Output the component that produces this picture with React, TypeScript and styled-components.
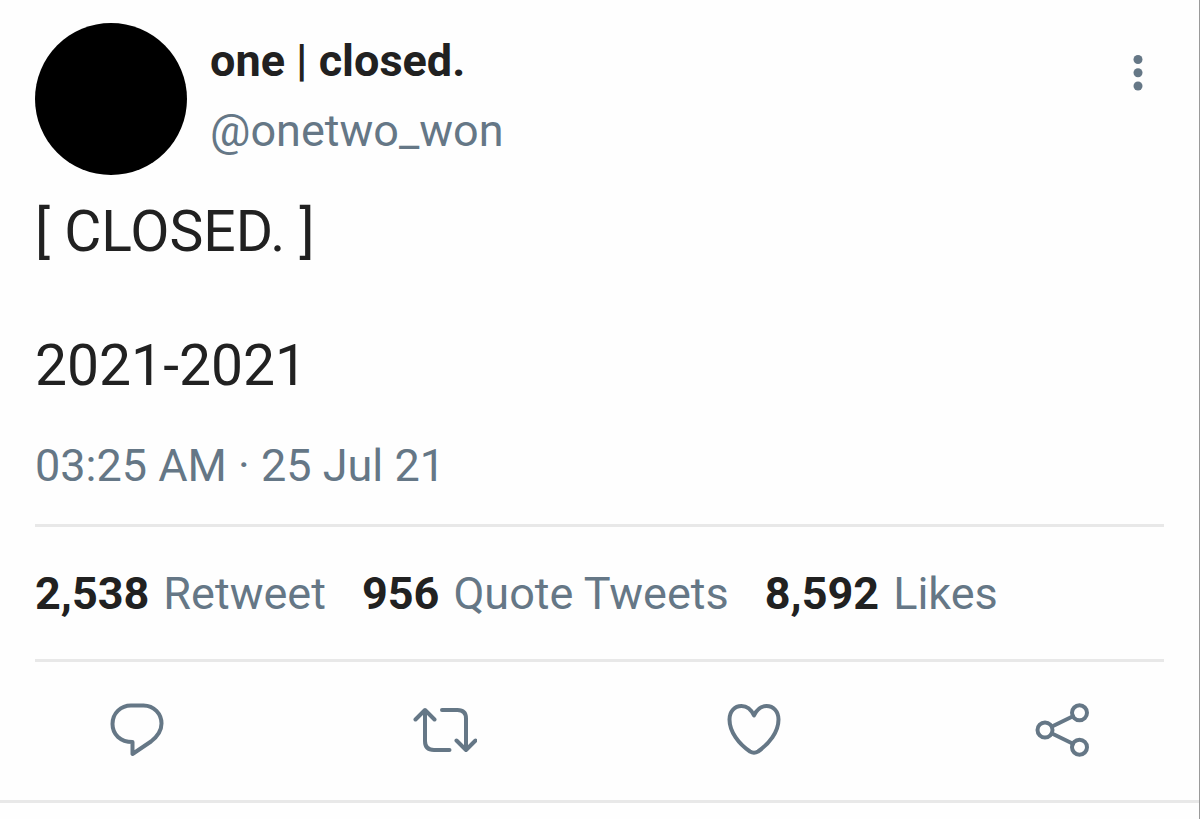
import React from "react";
import styled, { createGlobalStyle } from "styled-components";

const ink = "#212121";
const slate = "#657786";
const line = "#e8e8e8";

const GlobalStyle = createGlobalStyle`
  *, *::before, *::after { box-sizing: border-box; }
  body {
    margin: 0;
    background: #fefefe;
    color: ${ink};
    font-family: Roboto, "Liberation Sans", sans-serif;
    font-size: 45px;
  }
`;

const Page = styled.main`
  min-height: 100vh;
  border-right: 1px solid #9a9a9a;
`;

const Tweet = styled.article`
  padding: 23px 35px 0;
  border-bottom: 3px solid ${line};
`;

const Header = styled.header`
  display: flex;
  align-items: flex-start;
  gap: 23px;
`;

const Avatar = styled.div`
  flex: none;
  width: 152px;
  height: 152px;
  border-radius: 50%;
  background: #000;
`;

const Names = styled.div`
  display: flex;
  flex-direction: column;
  flex: 1;
  min-width: 0;
  padding-top: 3px;
  line-height: 70px;
`;

const DisplayName = styled.strong`
  font-weight: 700;
`;

const Handle = styled.a`
  color: ${slate};
  text-decoration: none;
`;

const IconButton = styled.button`
  display: flex;
  align-items: center;
  justify-content: center;
  width: 64px;
  height: 64px;
  padding: 0;
  border: 0;
  background: none;
  color: ${slate};
  cursor: pointer;
`;

const MenuButton = styled(IconButton)`
  width: 52px;
  height: 100px;
`;

const Body = styled.p`
  margin: 23px 0 41px;
  font-size: 57px;
  line-height: 67px;
  white-space: pre-line;
`;

const Timestamp = styled.time`
  display: block;
  padding-bottom: 32px;
  line-height: 52px;
  color: ${slate};
`;

const Stats = styled.div`
  display: flex;
  flex-wrap: wrap;
  gap: 0 36px;
  padding-top: 2px;
  border: solid ${line};
  border-width: 3px 0;
  line-height: 130px;
`;

const Stat = styled.a`
  display: flex;
  gap: 14px;
  color: ${slate};
  text-decoration: none;
`;

const Count = styled.strong`
  font-weight: 700;
  color: ${ink};
`;

const Actions = styled.div`
  display: flex;
  align-items: center;
  justify-content: space-between;
  height: 138px;
  padding: 0 70px;
`;

const Glyph = styled.svg`
  display: block;
  flex: none;
  width: 64px;
  height: 64px;
  fill: none;
  stroke: currentColor;
  stroke-width: 4;
  stroke-linecap: round;
  stroke-linejoin: round;
`;

const ReplyIcon = () => (
  <Glyph viewBox="0 0 64 64" aria-hidden="true">
    <path d="M27.500 43C15.500 43 7.500 35.500 7.500 25C7.500 14 16 6.500 26 6.500H38.500C49 6.500 56.500 15 56.500 24.500C56.500 32 53 37 46 42.500L27.500 55Z" />
  </Glyph>
);

const RetweetIcon = () => (
  <Glyph viewBox="0 0 64 64" aria-hidden="true">
    <path d="M2.500 20.500L12 11L21.500 20.500M12 12V42Q12 51 21 51H36.500M29 11H44.500Q53 11 53 19.500V51M43.500 41.500L53 51L62.500 41.500" />
  </Glyph>
);

const LikeIcon = () => (
  <Glyph viewBox="0 0 64 64" aria-hidden="true">
    <path d="M32 16.500C29 10 24.500 7 19.500 7C12.500 7 7.500 12.500 7.500 20.500C7.500 33 17 45 28 52.500Q32 54.800 36 52.500C47 45 56.500 33 56.500 20.500C56.500 12.500 51.500 7 44.500 7C39.500 7 35 10 32 16.500Z" />
  </Glyph>
);

const ShareIcon = () => (
  <Glyph viewBox="0 0 64 64" aria-hidden="true">
    <circle cx="15" cy="31" r="7.500" />
    <circle cx="49.500" cy="13.800" r="7.500" />
    <circle cx="49.500" cy="48.200" r="7.500" />
    <path d="M22 27.500L43 17.200M22 34.500L43 44.800" />
  </Glyph>
);

const MoreIcon = () => (
  <Glyph viewBox="0 0 64 64" aria-hidden="true">
    <g fill="currentColor" stroke="none">
      <circle cx="32" cy="18.500" r="4.500" />
      <circle cx="32" cy="31.800" r="4.500" />
      <circle cx="32" cy="45" r="4.500" />
    </g>
  </Glyph>
);

const stats = [
  { count: "2,538", label: "Retweet" },
  { count: "956", label: "Quote Tweets" },
  { count: "8,592", label: "Likes" },
];

const actions = [
  { label: "Reply", Icon: ReplyIcon },
  { label: "Retweet", Icon: RetweetIcon },
  { label: "Like", Icon: LikeIcon },
  { label: "Share", Icon: ShareIcon },
];

export default function App() {
  return (
    <>
      <GlobalStyle />
      <Page>
        <Tweet>
          <Header>
            <Avatar />
            <Names>
              <DisplayName>one | closed.</DisplayName>
              <Handle href="#profile">@onetwo_won</Handle>
            </Names>
            <MenuButton type="button" aria-label="More">
              <MoreIcon />
            </MenuButton>
          </Header>
          <Body>{"[ CLOSED. ]\n\n2021-2021"}</Body>
          <Timestamp dateTime="2021-07-25T03:25">03:25 AM · 25 Jul 21</Timestamp>
          <Stats>
            {stats.map((s) => (
              <Stat key={s.label} href="#stats">
                <Count>{s.count}</Count>
                <span>{s.label}</span>
              </Stat>
            ))}
          </Stats>
          <Actions>
            {actions.map(({ label, Icon }) => (
              <IconButton key={label} type="button" aria-label={label}>
                <Icon />
              </IconButton>
            ))}
          </Actions>
        </Tweet>
      </Page>
    </>
  );
}
